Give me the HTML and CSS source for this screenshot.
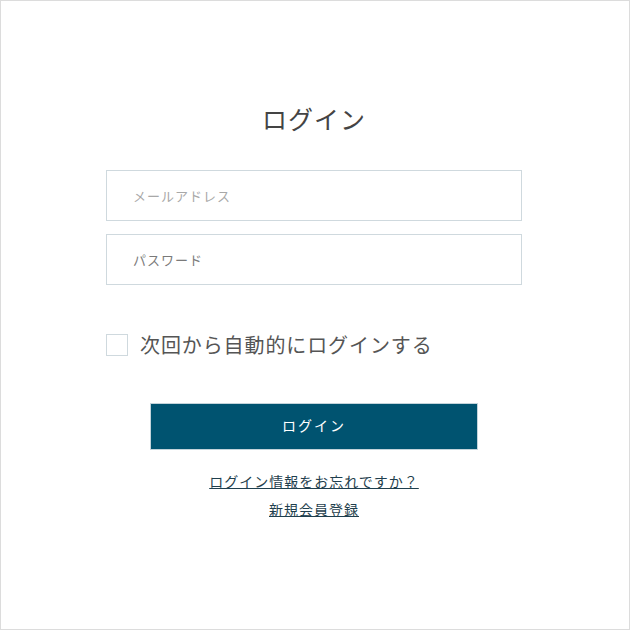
FILE: index.html
```html
<!DOCTYPE html>
<html lang="ja">
<head>
    <meta charset="UTF-8">
    <meta name="viewport" content="width=device-width, initial-scale=1.0">
    <title>ログイン</title>
    <link rel="stylesheet" href="styles.css">
</head>
<body>

    <!-- Login Frame -->
    <div class="frame">
        <div class="login-box">
            <h1 class="login-title">ログイン</h1>

            <form class="login-form" onsubmit="event.preventDefault()">
                <input type="email" class="field" placeholder="メールアドレス">
                <input type="password" class="field field-pass" placeholder="パスワード">

                <label class="remember">
                    <span class="check"></span>
                    <span class="remember-text">次回から自動的にログインする</span>
                </label>

                <button type="submit" class="login-button">ログイン</button>
            </form>

            <div class="links">
                <a href="#" class="link">ログイン情報をお忘れですか？</a>
                <a href="#" class="link">新規会員登録</a>
            </div>
        </div>
    </div>

</body>
</html>
```

FILE: styles.css
```css
/* Page */
body {
    margin: 0;
    padding: 0;
    font-family: "Noto Sans CJK JP", "Noto Sans", sans-serif;
    background: #ffffff;
}

/* Outer frame with thin border */
.frame {
    box-sizing: border-box;
    width: 630px;
    height: 630px;
    border: 1px solid #dcdcdc;
    padding-right: 2px;
    display: flex;
    justify-content: center;
}

.login-box {
    width: 416px;
    display: flex;
    flex-direction: column;
    align-items: center;
    padding-top: 99px;
}

/* Title */
.login-title {
    margin: 0;
    font-size: 25px;
    font-weight: 400;
    line-height: 36px;
    letter-spacing: 1px;
    color: #444444;
}

/* Form */
.login-form {
    width: 100%;
    display: flex;
    flex-direction: column;
    align-items: center;
    margin-top: 34px;
}

.field {
    box-sizing: border-box;
    width: 416px;
    height: 51px;
    padding: 0 26px;
    border: 1px solid #cfd9de;
    font-family: inherit;
    font-size: 13px;
    letter-spacing: 1px;
    color: #555555;
    outline: none;
    background: #ffffff;
}

.field::placeholder {
    color: #a8a8a8;
}

.field-pass {
    margin-top: 13px;
}

.field-pass::placeholder {
    color: #7a7a7a;
}

/* Remember me */
.remember {
    align-self: flex-start;
    display: flex;
    align-items: center;
    gap: 12px;
    margin-top: 49px;
    cursor: pointer;
}

.check {
    box-sizing: border-box;
    width: 22px;
    height: 22px;
    border: 1px solid #cfd9de;
    background: #ffffff;
}

.remember-text {
    font-size: 20px;
    line-height: 22px;
    letter-spacing: 0.9px;
    color: #555555;
}

/* Submit Button */
.login-button {
    box-sizing: border-box;
    width: 328px;
    height: 47px;
    margin-top: 47px;
    padding: 0 0 4px;
    border: 1px solid #c3d3da;
    background: #005370;
    color: #ffffff;
    font-family: inherit;
    font-size: 14px;
    letter-spacing: 2px;
    cursor: pointer;
}

/* Links */
.links {
    display: flex;
    flex-direction: column;
    align-items: center;
    gap: 7px;
    margin-top: 21px;
}

.link {
    font-size: 14px;
    line-height: 21px;
    letter-spacing: 1px;
    color: #1f3f4e;
    text-decoration: underline;
}
```
